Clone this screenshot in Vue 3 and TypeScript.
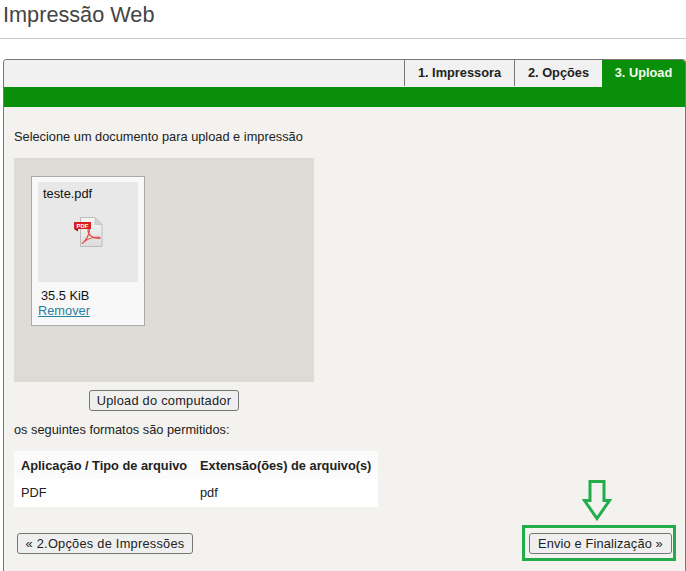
<script setup lang="ts">
const tabs = [
  { label: '1. Impressora', active: false },
  { label: '2. Opções', active: false },
  { label: '3. Upload', active: true },
]
</script>

<template>
  <div class="page">
    <header class="title"><h1>Impressão Web</h1></header>
    <section class="panel">
      <nav class="tabs">
        <div v-for="t in tabs" :key="t.label" class="tab" :class="{ active: t.active }">{{ t.label }}</div>
      </nav>
      <div class="bar"></div>
      <div class="body">
        <p class="intro">Selecione um documento para upload e impressão</p>
        <div class="drop">
          <div class="card">
            <div class="thumb">
              <span class="fname">teste.pdf</span>
              <svg class="pdf" width="30" height="30" viewBox="0 0 30 30">
                <defs>
                  <linearGradient id="pg" x1="0" y1="0" x2="0" y2="1">
                    <stop offset="0" stop-color="#f6f6f6" />
                    <stop offset="1" stop-color="#dcdcdc" />
                  </linearGradient>
                </defs>
                <path d="M7.5 .5H22L29 7.5V29.5H7.5Z" fill="url(#pg)" stroke="#bcbcbc" stroke-width="1" />
                <path d="M22 .5V7.5H29Z" fill="#d2d2d2" stroke="#bcbcbc" stroke-width="0.6" />
                <path d="M9 26.5C13 24 16.5 17 16.5 13.5C16.5 11 15 11 15 13.5C15 18 20 21.5 26 21.5C27.5 21.5 27.5 20 25 20C20 20 14 22 9 26.5Z" fill="none" stroke="#dd4a42" stroke-width="1.1" />
                <rect x="1" y="5" width="17" height="7" fill="#d8201f" />
                <path d="M1 12H5V14.5Z" fill="#8e1414" />
                <text x="9.5" y="10.8" text-anchor="middle" class="tag">PDF</text>
              </svg>
            </div>
            <div class="size">35.5 KiB</div>
            <a class="remove" href="#">Remover</a>
          </div>
        </div>
        <div class="upload-row"><button class="btn upload">Upload do computador</button></div>
        <p class="formats">os seguintes formatos são permitidos:</p>
        <table class="types">
          <thead>
            <tr>
              <th>Aplicação / Tipo de arquivo</th>
              <th>Extensão(ões) de arquivo(s)</th>
            </tr>
          </thead>
          <tbody>
            <tr>
              <td>PDF</td>
              <td>pdf</td>
            </tr>
          </tbody>
        </table>
        <div class="actions">
          <button class="btn back">« 2.Opções de Impressões</button>
          <div class="next-wrap">
            <svg class="arrow" width="30" height="41" viewBox="0 0 30 41">
              <path d="M8 1.5H22V20.5H27.5L15 38.5L2.5 20.5H8Z" fill="none" stroke="#22ac4b" stroke-width="3" />
            </svg>
            <button class="btn next">Envio e Finalização »</button>
          </div>
        </div>
      </div>
    </section>
  </div>
</template>

<style>
html, body { margin: 0; background: #fff; overflow: hidden; }
</style>

<style scoped>
.page {
  height: 571px;
  overflow: hidden;
  font-family: "Liberation Sans", Arial, sans-serif;
  font-size: 12.8px;
  color: #222;
}
.title {
  height: 38px;
  border-bottom: 1px solid #ccc;
  padding-left: 3px;
}
h1 {
  margin: 0;
  font-size: 21.7px;
  font-weight: 400;
  line-height: 30px;
  color: #444;
}
.panel {
  margin: 20px 0 0 3px;
  width: 683px;
  height: 520px;
  box-sizing: border-box;
  border: 1px solid #777;
  border-bottom: 0;
  border-radius: 4px 4px 0 0;
  background: #f3f2ee;
  overflow: hidden;
}
.tabs {
  display: flex;
  justify-content: flex-end;
  height: 27px;
  background: #f1f1f1;
}
.tab {
  display: flex;
  align-items: center;
  justify-content: center;
  font-weight: 700;
  font-size: 12.8px;
  border-left: 1px solid #777;
  height: 26px;
  padding-bottom: 2px;
  box-sizing: border-box;
  color: #222;
}
.tab:nth-child(1) { width: 110px; }
.tab:nth-child(2) { width: 88px; }
.tab.active {
  width: 83px;
  height: 27px;
  background: #0a8f0a;
  color: #f4fbf0;
  border-left: 0;
}
.bar { height: 20px; background: #0a8f0a; }
.body { position: relative; padding: 22px 10px 0; }
.intro { margin: 0; line-height: 15px; }
.drop {
  margin-top: 14px;
  width: 300px;
  height: 224px;
  background: #dcdbd6;
  padding: 18px 0 0 17px;
  box-sizing: border-box;
}
.card {
  width: 114px;
  height: 150px;
  box-sizing: border-box;
  border: 1px solid #aaa;
  background: #f8f8f8;
  padding: 5px 6px;
}
.thumb {
  width: 100px;
  height: 100px;
  background: #e8e8e8;
  position: relative;
  text-align: left;
}
.fname {
  display: block;
  padding: 4px 0 0 5px;
  line-height: 15px;
  color: #111;
}
.pdf { position: absolute; left: 35px; top: 35px; }
.tag {
  font-family: "Liberation Sans", Arial, sans-serif;
  font-size: 6px;
  font-weight: 700;
  fill: #fff;
}
.size { margin-top: 6px; padding-left: 3px; line-height: 15px; color: #111; }
.remove { display: block; line-height: 15px; color: #2a7f9f; text-decoration: underline; }
.upload-row { margin-top: 8px; width: 300px; display: flex; justify-content: center; }
.btn {
  font-family: inherit;
  font-size: 12.8px;
  color: #222;
  height: 21px;
  padding: 0;
  background: #efefef;
  border: 1px solid #767676;
  border-radius: 3px;
  letter-spacing: 0.25px;
}
.upload { width: 150px; }
.formats { margin: 11px 0 0; line-height: 15px; }
.types {
  margin-top: 14px;
  border-collapse: collapse;
  background: #fff;
  width: 364px;
  height: 56px;
}
.types th, .types td {
  text-align: left;
  padding: 0 0 0 7px;
  font-size: 12.8px;
  color: #222;
}
.types td { padding-bottom: 2px; }
.types th { height: 28px; background: #fbfbfb; font-weight: 700; }
.types th:first-child { width: 172px; }
.actions {
  margin-top: 26px;
  display: flex;
  justify-content: space-between;
  padding: 0 3px;
}
.back { width: 176px; }
.next-wrap {
  position: relative;
  height: 21px;
}
.next-wrap::after {
  content: "";
  position: absolute;
  inset: -8px -4px -7px -7px;
  border: 3px solid #22ac4b;
  pointer-events: none;
}
.next { width: 143px; display: block; letter-spacing: 0.15px; }
.arrow { position: absolute; left: 53px; top: -53px; }
</style>
